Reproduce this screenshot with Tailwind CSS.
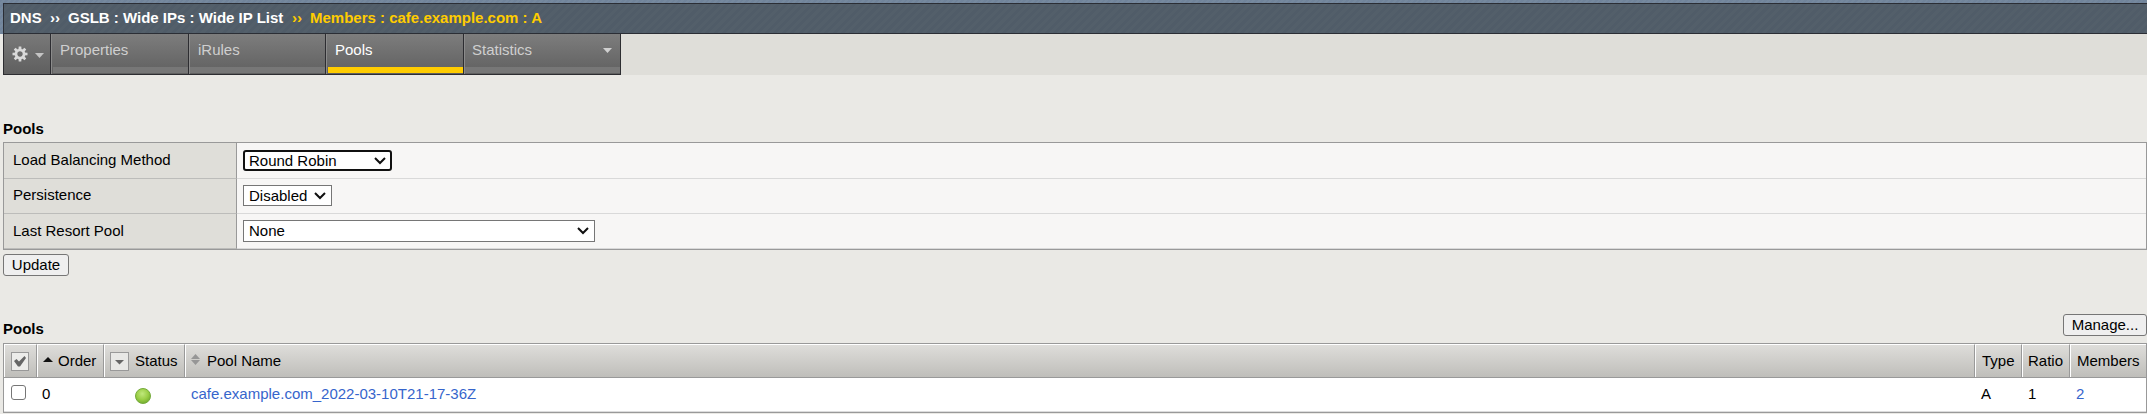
<!DOCTYPE html>
<html lang="en">
<head>
<meta charset="utf-8">
<title>Pools</title>
<script src="https://cdn.jsdelivr.net/npm/@tailwindcss/browser@4"></script>
</head>
<body class="w-[2147px] h-[414px] overflow-hidden bg-[#eae9e5] font-['Liberation_Sans',Arial,sans-serif] text-[15px] leading-[18px] text-black">
<header class="h-[34px] pl-[3px] pt-[3px] bg-[repeating-linear-gradient(135deg,#71849b_0px,#71849b_2px,#76899e_2px,#76899e_4px)]">
  <div class="h-[31px] border border-r-0 border-[#2b2e35] bg-[repeating-linear-gradient(135deg,#505c68_0px,#505c68_3px,#535f6a_3px,#535f6a_6px)] flex items-center pl-[6px] pb-px font-bold text-white whitespace-pre">
    <span class="w-[40px]">DNS</span><span class="w-[18px]">››</span><span class="w-[224px]">GSLB : Wide IPs : Wide IP List</span><span class="w-[18px] text-[#ffcc00]">››</span><span class="text-[#ffcc00]">Members : cafe.example.com : A</span>
  </div>
</header>
<nav class="ml-[3px] h-[41px] flex bg-[#dfded9] text-[#cfcfcf]">
  <div class="w-[48px] border-x border-b border-[#2d2d31] bg-linear-to-b from-[#797979] to-[#5f5f5f] flex items-center pl-[8px] gap-[7px]">
    <svg class="w-[16px] h-[16px]" viewBox="-8 -8 16 16"><g fill="#d9d9d9"><path id="t" d="M-1.300 -7.500h2.600l.3 4h-3.200zM-1.300 7.500h2.600l.3 -4h-3.200z"/><use href="#t" transform="rotate(45)"/><use href="#t" transform="rotate(90)"/><use href="#t" transform="rotate(135)"/></g><circle r="4" fill="none" stroke="#d9d9d9" stroke-width="2.600"/></svg>
    <svg class="w-[9px] h-[5px] mt-[3px]" viewBox="0 0 9 5"><path d="M0 0h9L4.500 5z" fill="#c4c4c4"/></svg>
  </div>
  <div class="w-[138px] border-r border-b border-[#2d2d31] flex"><div class="w-px bg-[#8b8b8b]"></div><div class="flex-1 flex flex-col bg-linear-to-b from-[#7d7d7d] to-[#606060]"><div class="h-[33px] pl-[8px] pt-[7px]">Properties</div><div class="h-[6px] ml-px bg-[#777]"></div></div></div>
  <div class="w-[137px] border-r border-b border-[#2d2d31] flex"><div class="w-px bg-[#8b8b8b]"></div><div class="flex-1 flex flex-col bg-linear-to-b from-[#7d7d7d] to-[#606060]"><div class="h-[33px] pl-[8px] pt-[7px]">iRules</div><div class="h-[6px] bg-[#777]"></div></div></div>
  <div class="w-[138px] border-r border-b border-[#2d2d31] flex"><div class="w-px bg-[#8b8b8b]"></div><div class="flex-1 flex flex-col bg-linear-to-b from-[#7d7d7d] to-[#606060]"><div class="h-[33px] pl-[8px] pt-[7px] text-white">Pools</div><div class="h-[6px] ml-px bg-[#ffcc00]"></div></div></div>
  <div class="w-[157px] border-r border-b border-[#2d2d31] flex"><div class="w-px bg-[#8b8b8b]"></div><div class="flex-1 flex flex-col bg-linear-to-b from-[#7d7d7d] to-[#606060]"><div class="h-[33px] pl-[7px] pr-[8px] pt-[7px] flex justify-between">Statistics<svg class="w-[9px] h-[5px] mt-[7px]" viewBox="0 0 9 5"><path d="M0 0h9L4.500 5z" fill="#d0d0d0"/></svg></div><div class="h-[6px] bg-[#777]"></div></div></div>
</nav>
<main class="pl-[3px]">
  <h2 class="h-[67px] pt-[45px] font-bold">Pools</h2>
  <section class="border border-[#999] h-[108px]">
    <div class="h-[36px] flex"><div class="w-[233px] border-r border-r-[#999] border-b border-b-[#bcbcba] bg-[#dfded9] pl-[9px] pt-[8px]">Load Balancing Method</div>
      <div class="flex-1 border-b border-[#d9d9d9] bg-[#f7f6f5] pl-[6px] pt-[7px]"><div class="w-[149px] h-[21px] rounded-[3px] border-2 border-[#101010] bg-white pl-[4px] pr-[4px] flex items-center justify-between"><span>Round Robin</span><svg class="w-[12px] h-[8px]" viewBox="0 0 12 8"><path d="M1 1l5 5 5-5" fill="none" stroke="#101010" stroke-width="2"/></svg></div></div></div>
    <div class="h-[35px] flex"><div class="w-[233px] border-r border-r-[#999] border-b border-b-[#bcbcba] bg-[#dfded9] pl-[9px] pt-[7px]">Persistence</div>
      <div class="flex-1 border-b border-[#d9d9d9] bg-[#f7f6f5] pl-[6px] pt-[6px]"><div class="w-[89px] h-[21px] border border-[#767676] bg-white pl-[5px] pr-[5px] flex items-center justify-between"><span>Disabled</span><svg class="w-[12px] h-[8px]" viewBox="0 0 12 8"><path d="M1 1l5 5 5-5" fill="none" stroke="#101010" stroke-width="2"/></svg></div></div></div>
    <div class="h-[35px] flex"><div class="w-[233px] border-r border-r-[#999] border-b border-b-[#bcbcba] bg-[#dfded9] pl-[9px] pt-[8px]">Last Resort Pool</div>
      <div class="flex-1 border-b border-[#d9d9d9] bg-[#f7f6f5] pl-[6px] pt-[6px]"><div class="w-[352px] h-[22px] border border-[#767676] bg-white pl-[5px] pr-[5px] flex items-center justify-between"><span>None</span><svg class="w-[12px] h-[8px]" viewBox="0 0 12 8"><path d="M1 1l5 5 5-5" fill="none" stroke="#101010" stroke-width="2"/></svg></div></div></div>
  </section>
  <button class="block mt-[4px] w-[66px] h-[22px] rounded-[3px] border border-[#767676] bg-[#efefef] leading-[20px]">Update</button>
  <div class="h-[67px] pt-[38px] flex justify-between">
    <h2 class="font-bold pt-[6px]">Pools</h2>
    <button class="w-[84px] h-[22px] rounded-[3px] border border-[#767676] bg-[#efefef] leading-[20px]">Manage...</button>
  </div>
  <section class="border border-[#999] h-[70px] bg-white">
    <div class="h-[34px] flex border-b border-[#999] bg-linear-to-b from-[#dfdedb] to-[#bfbeba] *:border-l *:border-l-white *:border-t *:border-t-white *:flex *:items-center">
      <div class="w-[33px] border-r border-r-[#999] pl-[6px]"><svg class="w-[18px] h-[19px]" viewBox="0 0 18 19"><rect x=".5" y=".5" width="17" height="18" fill="#ececea" stroke="#999"/><path d="M3 9l2.500-2 2.500 2.500L13.500 4l1.500 2L9 14.500H7z" fill="#666"/></svg></div>
      <div class="w-[67px] border-r border-r-[#999] pl-[5px]"><svg class="w-[10px] h-[5px] mb-[4px]" viewBox="0 0 10 5"><path d="M0 5h10L5 0z" fill="#111"/></svg><span class="ml-[5px]">Order</span></div>
      <div class="w-[81px] border-r border-r-[#999] pl-[5px]"><svg class="w-[19px] h-[19px]" viewBox="0 0 19 19"><rect x=".5" y=".5" width="18" height="18" fill="#e8e8e6" stroke="#999"/><path d="M5 8h9L9.500 12.500z" fill="#666"/></svg><span class="ml-[6px]">Status</span></div>
      <div class="w-[1790px] border-r border-r-[#999] pl-[5px]"><svg class="w-[9px] h-[11px] mb-[3px]" viewBox="0 0 9 11"><path d="M0 5h9L4.500 0zM0 6h9L4.500 11z" fill="#969696"/></svg><span class="ml-[7px]">Pool Name</span></div>
      <div class="w-[47px] border-r border-r-[#999] pl-[6px]">Type</div>
      <div class="w-[48px] border-r border-r-[#999] pl-[5px]">Ratio</div>
      <div class="flex-1 pl-[6px]">Members</div>
    </div>
    <div class="h-[34px] flex border-b border-[#ddd] pt-[7px]">
      <div class="w-[38px] pl-[7px]"><div class="w-[15px] h-[15px] rounded-[3px] border border-[#767676] bg-white"></div></div>
      <div class="w-[93px]">0</div>
      <div class="w-[56px] pt-[3px]"><svg class="w-[16px] h-[16px]" viewBox="0 0 16 16"><defs><radialGradient id="g" cx=".45" cy=".35" r=".65"><stop offset="0" stop-color="#c0e87c"/><stop offset=".6" stop-color="#9ace46"/><stop offset="1" stop-color="#74ad30"/></radialGradient></defs><circle cx="8" cy="8" r="7.500" fill="url(#g)" stroke="#76ab3c"/></svg></div>
      <div class="w-[1790px] text-[#3665cc]">cafe.example.com_2022-03-10T21-17-36Z</div>
      <div class="w-[47px]">A</div>
      <div class="w-[48px]">1</div>
      <div class="text-[#3665cc]">2</div>
    </div>
  </section>
</main>
</body>
</html>
